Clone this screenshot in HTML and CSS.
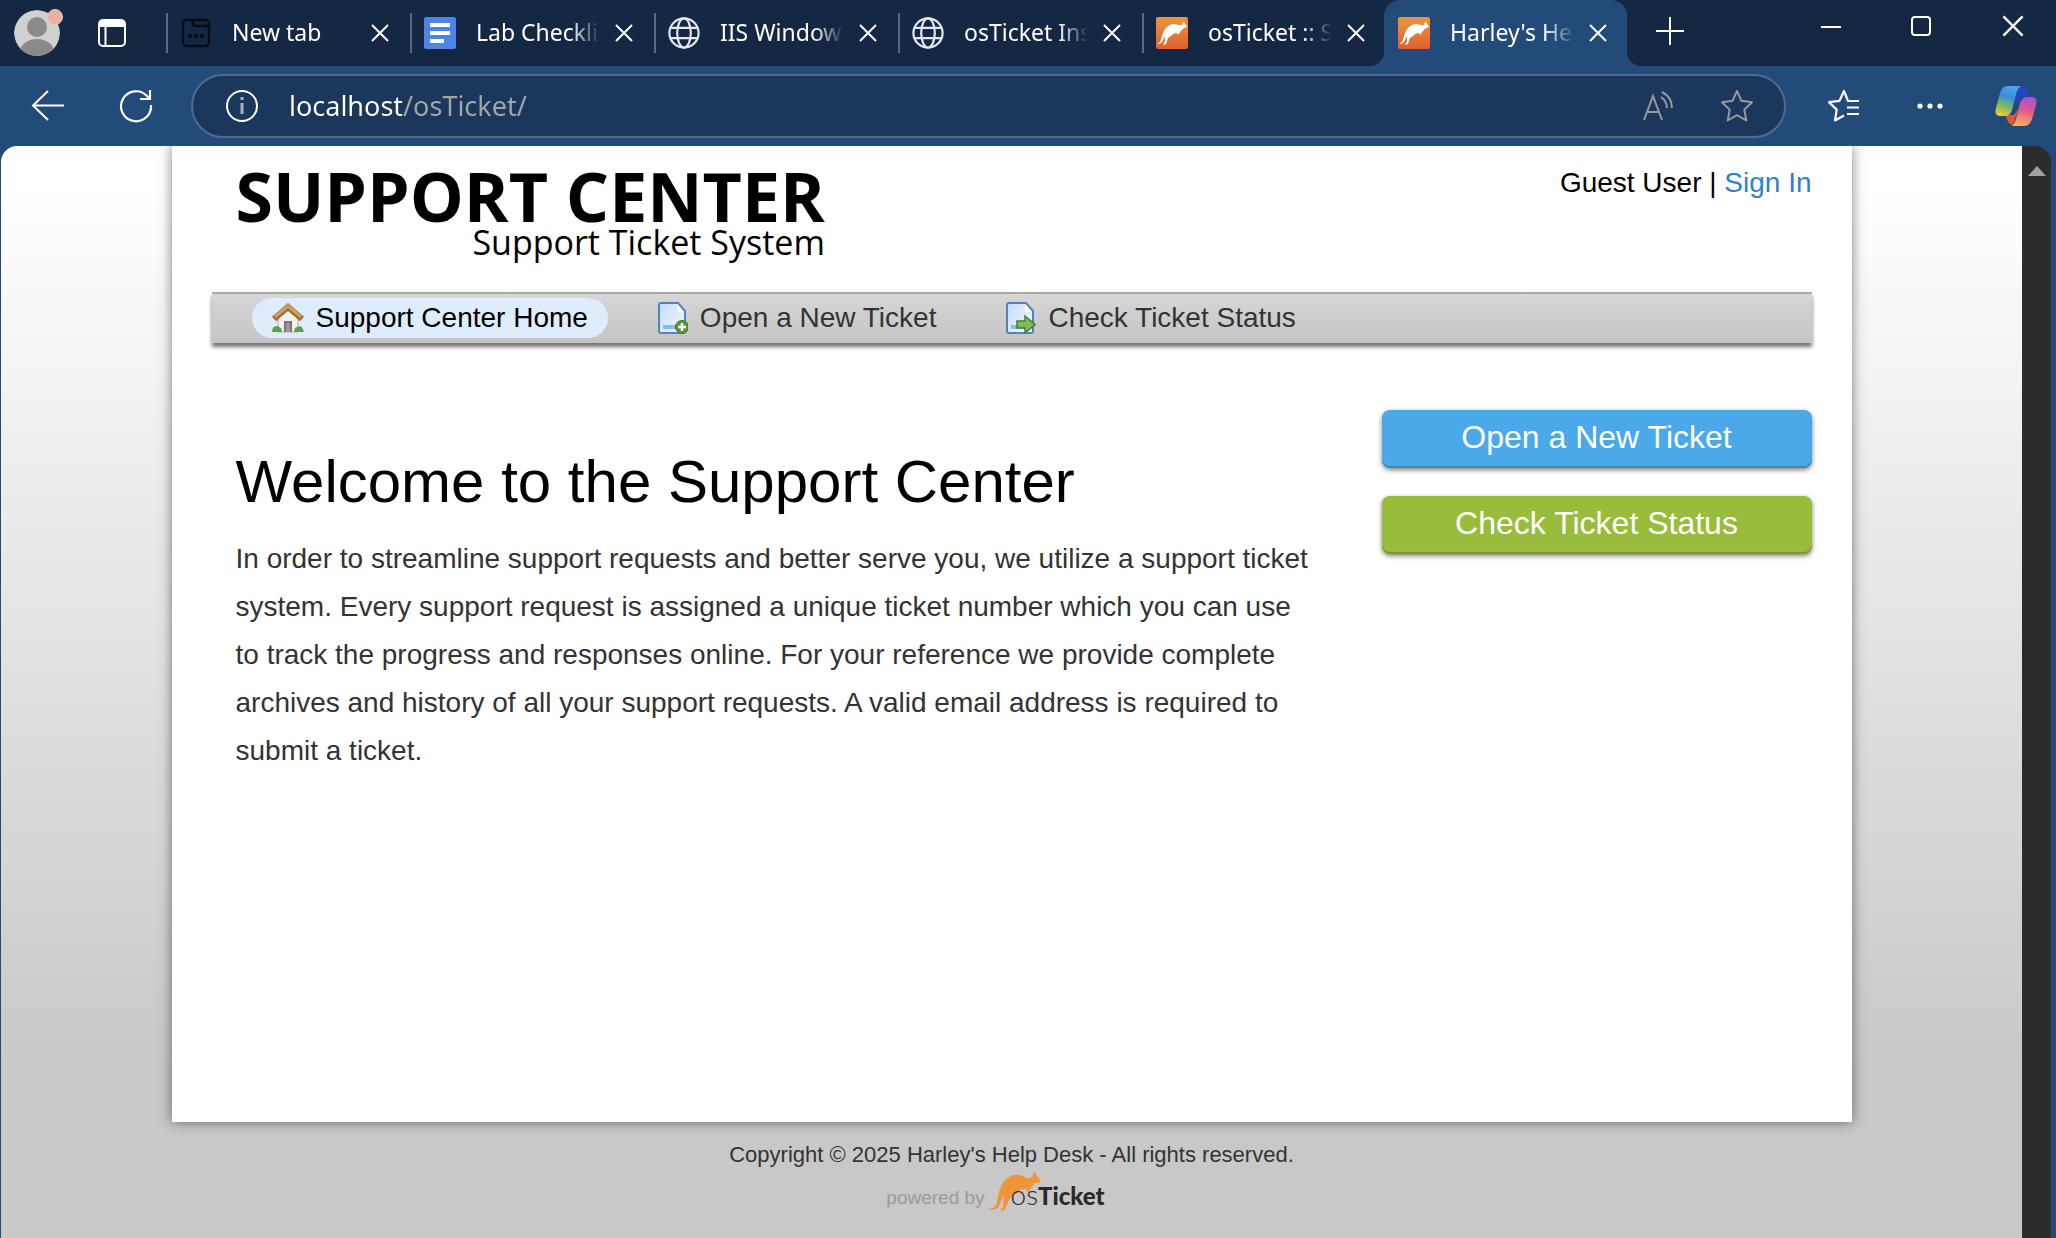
FILE: index.html
```html
<!DOCTYPE html>
<html lang="en">
<head>
<meta charset="utf-8">
<title>Harley's Help Desk</title>
<link rel="stylesheet" href="styles.css">
</head>
<body>
<svg class="defs" aria-hidden="true">
  <defs>
    <linearGradient id="orange" x1="0" y1="0" x2="0" y2="1"><stop offset="0" stop-color="#e9963f"/><stop offset="1" stop-color="#e0602f"/></linearGradient>
    <linearGradient id="paper" x1="0" y1="0" x2="1" y2="1"><stop offset="0" stop-color="#c3dcf8"/><stop offset="1" stop-color="#f4f9ff"/></linearGradient>
    <linearGradient id="cpBlue" x1="0.6" y1="0" x2="0.3" y2="1"><stop offset="0" stop-color="#4aa8f0"/><stop offset=".35" stop-color="#3a8be0"/><stop offset=".65" stop-color="#6dba6a"/><stop offset="1" stop-color="#f2c832"/></linearGradient>
    <linearGradient id="cpPink" x1="0.6" y1="0" x2="0.4" y2="1"><stop offset="0" stop-color="#a651e0"/><stop offset=".45" stop-color="#e05a8c"/><stop offset="1" stop-color="#f8ae5c"/></linearGradient>
    <symbol id="close" viewBox="0 0 20 20"><path d="M2 2 18 18M18 2 2 18" fill="none" stroke="currentColor" stroke-width="2"/></symbol>
    <symbol id="globe" viewBox="0 0 32 32"><g fill="none" stroke="currentColor" stroke-width="2.2"><circle cx="16" cy="16" r="14.6"/><ellipse cx="16" cy="16" rx="6.8" ry="14.6"/><path d="M2.5 10.8h27M2.5 21.2h27"/></g></symbol>
    <symbol id="roo" viewBox="0 0 155 117"><path fill="currentColor" d="M0 109C14 110 20 104 23 92C28 72 28 56 38 38C48 20 64 8 84 8C98 8 106 14 114 19C121 18 126 15 131 12L133 0L137 0L142 10L155 27L151 32L138 32C134 38 130 42 126 46L118 62L112 58L114 50C106 52 98 50 92 54L88 62L74 68C64 76 58 84 55 94L49 112L36 117L36 111L42 104L43 84L47 68C40 76 34 88 31 100C27 112 18 114 0 112Z"/></symbol>
    <symbol id="rooFavicon" viewBox="0 0 32 32"><rect width="32" height="32" rx="2" fill="url(#orange)"/><path fill="#fff" d="M2 26C5 26 5 21 7 16C9 11 13 7 18 7C21 7 23 9 26 8L27 5 28 5 31 10 28 11C26 12 25 14 22 18L21 16C18 16 17 17 15 19L12 21 10 27 7 28 9 24 9 19C7 23 6 27 2 27Z"/></symbol>
    <symbol id="page" viewBox="0 0 30 32"><path d="M3 1H20L27 9V29Q27 31 25 31H3Q1 31 1 29V3Q1 1 3 1Z" fill="url(#paper)" stroke="#5282c4" stroke-width="2"/><path d="M19 2V8Q19 10 21 10H26Z" fill="#fff"/><path d="M5 23H19V27H5Z" fill="#7fbdf5"/></symbol>
  </defs>
</svg>

<div class="tabstrip">
  <div class="window-tools">
    <button class="icon-button profile" aria-label="Profile">
      <svg width="50" height="50" viewBox="0 0 50 50"><clipPath id="face"><circle cx="24" cy="27" r="23"/></clipPath><g clip-path="url(#face)"><circle cx="24" cy="27" r="23" fill="#d0d0d0"/><circle cx="24" cy="21" r="10" fill="#8a8a8a"/><ellipse cx="24" cy="46" rx="17" ry="13" fill="#8a8a8a"/></g><circle cx="42" cy="11" r="7.5" fill="#f0ada2" stroke="#d8d0d0"/></svg>
    </button>
    <button class="icon-button" aria-label="Workspaces">
      <svg width="30" height="30" viewBox="0 0 30 30"><rect x="2" y="2" width="26" height="26" rx="4" fill="none" stroke="#fff" stroke-width="2"/><path d="M2 9V6Q2 2 6 2H24Q28 2 28 6V9Z" fill="#fff"/><path d="M8.500 9V28" stroke="#fff" stroke-width="2"/></svg>
    </button>
  </div>
  <nav class="tabs" aria-label="Open tabs">
    <div class="tab"><svg class="favicon" viewBox="0 0 32 32"><g fill="none" stroke="#060d18" stroke-width="2.500"><rect x="3" y="3" width="26" height="26" rx="4"/><path d="M13 3V7Q13 9 15 9H29"/></g><path d="M8 17h4v4H8zM14 17h4v4h-4zM20 17h4v4h-4z" fill="#060d18"/></svg><button class="tab-title">New tab</button><button class="icon-button tab-close" aria-label="Close tab"><svg><use href="#close"/></svg></button></div>
    <div class="tab"><svg class="favicon" viewBox="0 0 32 32"><rect width="32" height="32" rx="2" fill="#4f83ea"/><path d="M6 8h20M6 16h20M6 24h14" stroke="#fff" stroke-width="4"/></svg><button class="tab-title">Lab Checklist</button><button class="icon-button tab-close" aria-label="Close tab"><svg><use href="#close"/></svg></button></div>
    <div class="tab"><svg class="favicon"><use href="#globe"/></svg><button class="tab-title">IIS Windows Server</button><button class="icon-button tab-close" aria-label="Close tab"><svg><use href="#close"/></svg></button></div>
    <div class="tab"><svg class="favicon"><use href="#globe"/></svg><button class="tab-title">osTicket Installation</button><button class="icon-button tab-close" aria-label="Close tab"><svg><use href="#close"/></svg></button></div>
    <div class="tab"><svg class="favicon"><use href="#rooFavicon"/></svg><button class="tab-title">osTicket :: Staff</button><button class="icon-button tab-close" aria-label="Close tab"><svg><use href="#close"/></svg></button></div>
    <div class="tab tab-active"><svg class="favicon"><use href="#rooFavicon"/></svg><button class="tab-title">Harley's Help Desk</button><button class="icon-button tab-close" aria-label="Close tab"><svg><use href="#close"/></svg></button></div>
  </nav>
  <button class="icon-button new-tab" aria-label="New tab"><svg width="28" height="28" viewBox="0 0 28 28"><path d="M14 0V28M0 14H28" stroke="#fff" stroke-width="2"/></svg></button>
  <div class="window-controls">
    <button class="icon-button" aria-label="Minimize"><svg width="20" height="20" viewBox="0 0 20 20"><path d="M0 11H20" stroke="#fff" stroke-width="2"/></svg></button>
    <button class="icon-button" aria-label="Maximize"><svg width="20" height="20" viewBox="0 0 20 20"><rect x="1" y="1" width="18" height="18" rx="3" fill="none" stroke="#fff" stroke-width="2"/></svg></button>
    <button class="icon-button" aria-label="Close window"><svg width="24" height="24"><use href="#close"/></svg></button>
  </div>
</div>

<div class="toolbar">
  <button class="icon-button" aria-label="Back"><svg width="34" height="34" viewBox="0 0 34 34"><path d="M33 16.500H2M17 2 2 16.500 17 31" fill="none" stroke="#fff" stroke-width="2"/></svg></button>
  <button class="icon-button" aria-label="Refresh"><svg width="34" height="34" viewBox="0 0 34 34"><path d="M32 16A15 15 0 1 1 28 7L31 10M31 1V10H21" fill="none" stroke="#fff" stroke-width="2.200"/></svg></button>
  <form class="address">
    <svg width="34" height="34" viewBox="0 0 34 34"><circle cx="17" cy="17" r="15" fill="none" stroke="#fff" stroke-width="2"/><path d="M17 14V25" stroke="#a9b4c2" stroke-width="3"/><path d="M15.500 8h3v3h-3z" fill="#a9b4c2"/></svg>
    <input class="url" type="text" value="localhost/osTicket/" aria-label="Address">
    <button class="icon-button" type="button" aria-label="Read aloud"><svg width="32" height="32" viewBox="0 0 32 32"><g fill="none" stroke="#989a9c" stroke-width="2"><path d="M2 30 11 6 20 30M5 22H17M19 7A14 14 0 0 1 25 18M20 2A18 18 0 0 1 30 18"/></g></svg></button>
    <button class="icon-button" type="button" aria-label="Add to favorites"><svg width="34" height="34" viewBox="0 0 34 34"><path d="M17 2 21.500 11.800 32 13.200 24.300 20.600 26.300 31.500 17 26.200 7.700 31.500 9.700 20.600 2 13.200 12.500 11.800Z" fill="none" stroke="#989a9c" stroke-width="2" stroke-linejoin="round"/></svg></button>
  </form>
  <div class="toolbar-actions">
    <button class="icon-button" aria-label="Favorites"><svg width="34" height="34" viewBox="0 0 34 34"><path d="M32 12H21L17 2 12.500 11.800 2 13.200 9.700 20.600 8 31.500 17 26.500M20 18.500H32M20 25H32" fill="none" stroke="#fff" stroke-width="2.200" stroke-linejoin="round"/></svg></button>
    <button class="icon-button" aria-label="Settings and more"><svg width="28" height="8" viewBox="0 0 28 8"><g fill="#fff"><circle cx="4" cy="4" r="2.600"/><circle cx="14" cy="4" r="2.600"/><circle cx="24" cy="4" r="2.600"/></g></svg></button>
    <button class="icon-button" aria-label="Copilot"><svg width="44" height="42" viewBox="0 0 44 42"><path d="M22 1H28Q32 1 33 6L35 12H30Q26 12 25 16L21 20Z" fill="#2444c4"/><path d="M12 30H20L24 24 20 38Q19 41 16 39Q13 37 12 30Z" fill="#e4572e"/><path d="M14 1H27Q24 2 22 9L18 25Q16 31 11 31H6Q0 31 2 23L6 8Q8 1 14 1Z" fill="url(#cpBlue)"/><path d="M33 12H38Q44 12 42 20L38 34Q36 41 30 41H17Q20 41 22 34L26 18Q28 12 33 12Z" fill="url(#cpPink)"/></svg></button>
  </div>
</div>

<div class="viewport">
  <div class="page">
    <div class="container">
      <header class="header">
        <a class="logo" href="#"><span class="logo-title">SUPPORT CENTER</span><span class="logo-tagline">Support Ticket System</span></a>
        <p class="account">Guest User | <a class="link" href="#">Sign In</a></p>
      </header>
      <nav class="nav" aria-label="Support center">
        <a class="nav-item nav-item-active" href="#"><svg width="32" height="32" viewBox="0 0 32 32"><path d="M6 15 16 6 26 15V30H6Z" fill="#f3f1ee" stroke="#aaa"/><path d="M12 19H20V30H12Z" fill="#777"/><path d="M14 21H18V30H14Z" fill="#999"/><path d="M0 30Q0 24 5 24L9 26 10 30ZM22 30L23 26Q27 23 30 25L32 30Z" fill="#5aa04a"/><path d="M2 17 16 5 30 17" fill="none" stroke="#9c6a33" stroke-width="6"/><path d="M3 15 16 4 29 15" fill="none" stroke="#d0a05f" stroke-width="3"/></svg>Support Center Home</a>
        <a class="nav-item" href="#"><svg width="30" height="32" viewBox="0 0 30 32"><use href="#page"/><circle cx="24" cy="25" r="6.500" fill="#5c9639" stroke="#3f7426"/><path d="M24 21V29M20 25H28" stroke="#fff" stroke-width="2.500"/></svg>Open a New Ticket</a>
        <a class="nav-item" href="#"><svg width="30" height="32" viewBox="0 0 30 32"><use href="#page"/><path d="M11 19H19V14L29 22.500 19 31V26H11Z" fill="#86b862" stroke="#44802f" stroke-width="1.500"/></svg>Check Ticket Status</a>
      </nav>
      <div class="content">
        <main class="welcome">
          <h1 class="welcome-title">Welcome to the Support Center</h1>
          <p class="welcome-text">In order to streamline support requests and better serve you, we utilize a support ticket system. Every support request is assigned a unique ticket number which you can use to track the progress and responses online. For your reference we provide complete archives and history of all your support requests. A valid email address is required to submit a ticket.</p>
        </main>
        <aside class="actions">
          <button class="button button-blue">Open a New Ticket</button>
          <button class="button button-green">Check Ticket Status</button>
        </aside>
      </div>
    </div>
    <footer class="footer">
      <p class="copyright">Copyright © 2025 Harley's Help Desk - All rights reserved.</p>
      <a class="powered" href="#"><span class="powered-by">powered by</span><svg class="powered-roo" width="52" height="39"><use href="#roo"/></svg><span class="brand"><span class="brand-os">os</span>Ticket</span></a>
    </footer>
  </div>
  <div class="scrollbar"><svg width="18" height="10" viewBox="0 0 18 10"><path d="M9 0 18 10H0Z" fill="#a0a0a0"/></svg></div>
</div>
</body>
</html>
```
FILE: styles.css
```css
* {
  box-sizing: border-box;
}

body {
  display: flex;
  flex-direction: column;
  min-height: 100vh;
  margin: 0;
  background: #224b79;
  font-family: "Liberation Sans", Arial, sans-serif;
}

p,
h1 {
  margin: 0;
}

a {
  color: inherit;
  text-decoration: none;
}

svg {
  display: block;
  flex: none;
}

.defs {
  position: absolute;
  width: 0;
  height: 0;
}

.icon-button {
  display: flex;
  flex: none;
  align-items: center;
  justify-content: center;
  padding: 0;
  border: 0;
  background: none;
  color: #fff;
}

/* Browser tab strip */
.tabstrip {
  display: flex;
  height: 66px;
  background: #142844;
}

.window-tools {
  display: flex;
  flex: none;
  align-items: center;
  gap: 34px;
  width: 166px;
  padding-left: 13px;
}

.profile {
  padding-bottom: 4px;
}

.tabs {
  display: flex;
}

.tab {
  display: flex;
  align-items: center;
  width: 244px;
  padding-left: 14px;
  background: linear-gradient(#5b6a80, #5b6a80) 0 13px / 2px 40px no-repeat;
}

.tab:nth-last-child(2) {
  width: 242px;
}

.favicon {
  width: 32px;
  height: 32px;
  color: #e4e8ee;
}

.tab-title {
  width: 124px;
  margin: 0 14px 2px 20px;
  padding: 0;
  overflow: hidden;
  border: 0;
  background: none;
  color: #fff;
  font: 23px/32px "Noto Sans", sans-serif;
  text-align: left;
  white-space: nowrap;
  -webkit-mask-image: linear-gradient(to right, #000 76%, transparent);
  mask-image: linear-gradient(to right, #000 76%, transparent);
}

.tab-close svg {
  width: 20px;
  height: 20px;
}

.tab-active {
  position: relative;
  width: 243px;
  border-radius: 16px 16px 0 0;
  background: #224b79;
}

.tab-active::before,
.tab-active::after {
  position: absolute;
  bottom: 0;
  width: 14px;
  height: 14px;
  content: "";
}

.tab-active::before {
  right: 100%;
  background: radial-gradient(circle at 0 0, transparent 14px, #224b79 14px);
}

.tab-active::after {
  left: 100%;
  background: radial-gradient(circle at 100% 0, transparent 14px, #224b79 14px);
}

.new-tab {
  width: 86px;
  padding-bottom: 4px;
}

.window-controls {
  display: flex;
  gap: 70px;
  margin-left: auto;
  padding: 0 31px 14px 0;
}

/* Browser toolbar */
.toolbar {
  display: flex;
  align-items: center;
  gap: 54px;
  height: 80px;
  padding: 0 18px 0 31px;
}

.toolbar > .icon-button + .icon-button {
  margin-right: -16px;
}

.address {
  display: flex;
  flex: 1;
  align-items: center;
  gap: 46px;
  height: 64px;
  padding: 0 30px 0 32px;
  border: 2px solid #506b8b;
  border-radius: 32px;
  background: #1b375c;
}

.url {
  flex: 1;
  min-width: 0;
  margin-left: -16px;
  padding: 0;
  border: 0;
  background: linear-gradient(to right, #fff 113px, #a3a6a8 113px);
  -webkit-background-clip: text;
  background-clip: text;
  color: transparent;
  font: 27px/36px "Noto Sans", sans-serif;
}

.toolbar-actions {
  display: flex;
  gap: 42px;
  align-items: center;
  margin-left: -18px;
}

.toolbar-actions .icon-button {
  width: 44px;
}

/* Page area */
.viewport {
  display: flex;
  flex: 1;
  padding: 0 5px 0 1px;
}

.page {
  display: flex;
  flex: 1;
  flex-direction: column;
  align-items: center;
  overflow: hidden;
  border-top-left-radius: 16px;
  background: #c8c8c8 linear-gradient(#fff, #fff 40px, #c8c8c8) 0 0 / 100% 920px no-repeat;
}

.scrollbar {
  width: 29px;
  padding: 20px 6px;
  border-top-right-radius: 16px;
  background: #2c2c2c;
}

.container {
  flex: 1;
  width: 100%;
  max-width: 1680px;
  padding: 0 40px;
  background: #fff;
  box-shadow: 0 0 12px rgba(0, 0, 0, 0.5);
}

.header {
  display: flex;
  align-items: flex-start;
  justify-content: space-between;
  padding: 20px 0 34px 24px;
}

.logo {
  display: flex;
  flex-direction: column;
  align-items: flex-end;
  color: #000;
  font-family: "Open Sans", sans-serif;
}

.logo-title {
  font-size: 68px;
  font-weight: 700;
  line-height: 60px;
}

.logo-tagline {
  font-size: 34px;
  line-height: 32px;
}

.account {
  font-size: 28px;
  line-height: 34px;
}

.link {
  color: #337fc9;
}

.nav {
  display: flex;
  gap: 30px;
  padding: 4px 40px 5px;
  border-top: 2px solid #aaa;
  background: linear-gradient(#d6d6d6, #c4c4c4);
  box-shadow: 0 4px 4px rgba(0, 0, 0, 0.55);
}

.nav-item {
  display: flex;
  align-items: center;
  gap: 12px;
  height: 40px;
  padding: 0 20px;
  border-radius: 20px;
  color: #333;
  font-size: 28px;
}

.nav-item-active {
  background: #dfecfe;
  color: #000;
}

.content {
  display: grid;
  grid-template-columns: 1fr 430px;
  gap: 64px;
  padding: 67px 0 40px 24px;
}

.welcome {
  padding-top: 36px;
}

.welcome-title {
  color: #000;
  font-size: 60px;
  font-weight: 400;
  line-height: 72px;
}

.welcome-text {
  margin-top: 17px;
  color: #333;
  font-size: 28px;
  line-height: 48px;
}

.actions {
  display: flex;
  flex-direction: column;
  gap: 28px;
}

.button {
  height: 58px;
  padding: 0 0 4px;
  border: 0;
  border-radius: 8px;
  box-shadow: 0 2px 5px rgba(0, 0, 0, 0.5), inset 0 -2px 1px rgba(0, 0, 0, 0.2);
  color: #fff;
  font: 32px/36px "Liberation Sans", Arial, sans-serif;
}

.button-blue {
  background: #4ba9e9;
}

.button-green {
  background: #99bc3b;
}

/* Footer */
.footer {
  display: flex;
  flex-direction: column;
  align-items: center;
  height: 116px;
  padding-top: 19px;
}

.copyright {
  color: #333;
  font-size: 22px;
  line-height: 28px;
}

.powered {
  display: flex;
  align-items: flex-end;
  height: 42px;
  margin-right: 32px;
}

.powered-by {
  margin-right: 4px;
  color: #9b9b9b;
  font-size: 19px;
  line-height: 26px;
}

.powered-roo {
  color: #f0943a;
}

.brand {
  margin-left: -30px;
  color: #2a2a2a;
  font: 900 24px/30px Lato, sans-serif;
}

.brand-os {
  font-size: 28px;
  font-weight: 300;
}
```
